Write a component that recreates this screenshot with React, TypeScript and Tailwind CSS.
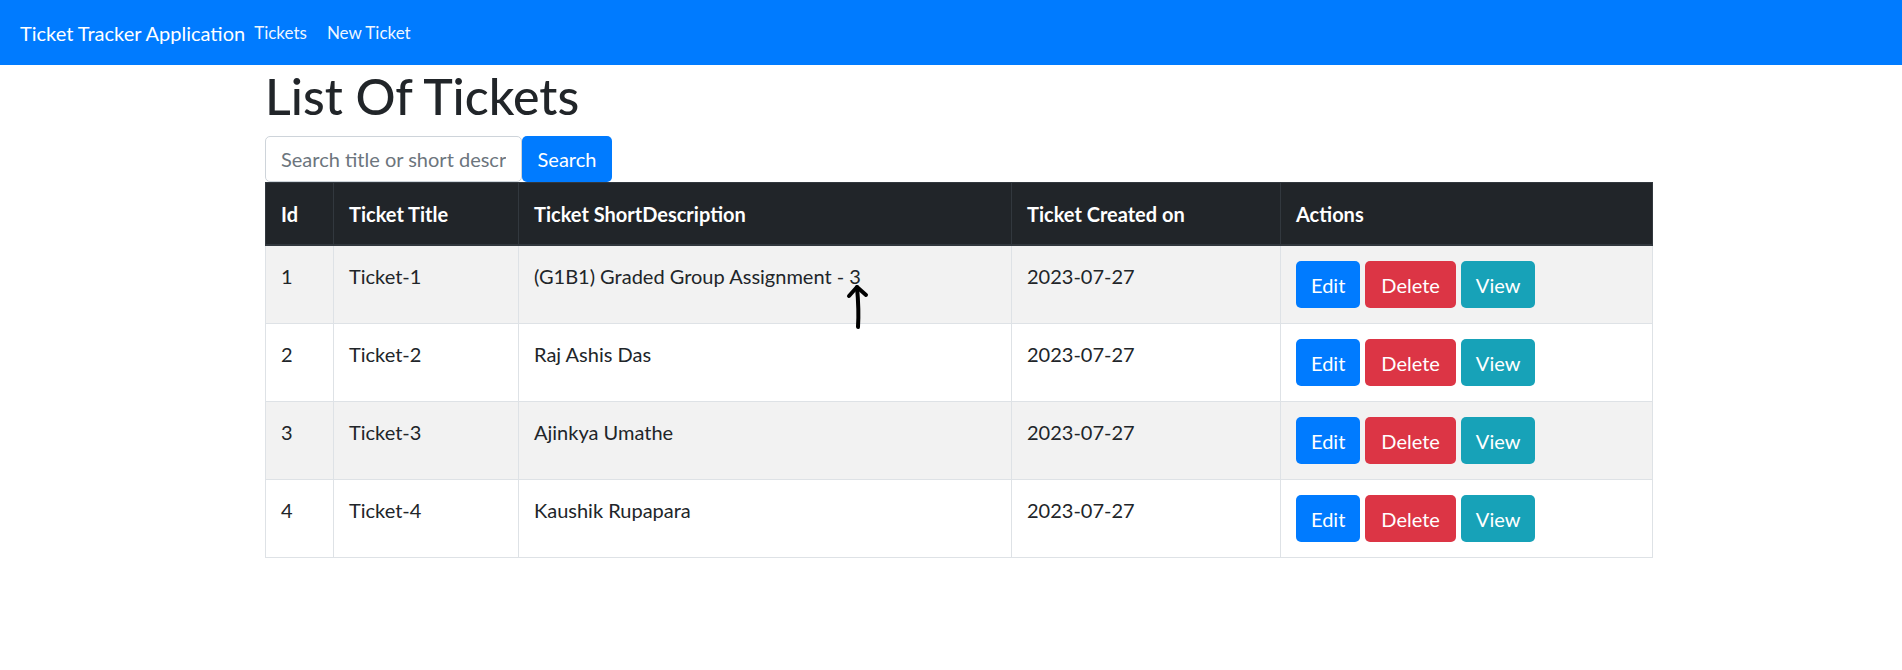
import React from 'react'

type Ticket = {
  id: number
  title: string
  shortDescription: string
  createdOn: string
}

const tickets: Ticket[] = [
  { id: 1, title: 'Ticket-1', shortDescription: '(G1B1) Graded Group Assignment - 3', createdOn: '2023-07-27' },
  { id: 2, title: 'Ticket-2', shortDescription: 'Raj Ashis Das', createdOn: '2023-07-27' },
  { id: 3, title: 'Ticket-3', shortDescription: 'Ajinkya Umathe', createdOn: '2023-07-27' },
  { id: 4, title: 'Ticket-4', shortDescription: 'Kaushik Rupapara', createdOn: '2023-07-27' },
]

const font = { fontFamily: 'Lato, "Open Sans", sans-serif' }

function Navbar() {
  return (
    <nav className="flex h-[65px] items-center bg-[#007bff] pl-[20px] text-white">
      <a href="#" className="text-[20px] leading-[30px] text-white">Ticket Tracker Application</a>
      <a href="#" className="ml-[9px] text-[17px] leading-[30px] text-white/95">Tickets</a>
      <a href="#" className="ml-[20px] text-[17px] leading-[30px] text-white/95">New Ticket</a>
    </nav>
  )
}

export default function App() {
  return (
    <div className="min-h-screen bg-white text-[#212529]" style={font}>
      <Navbar />

      <div className="ml-[265px] w-[1387px]">
        <h1 className="mt-[1px] mb-[10px] text-[50px] font-medium leading-[1.2]">List Of Tickets</h1>

        {/* Search */}
        <form className="flex h-[46px]">
          <input
            type="text"
            placeholder="Search title or short description"
            className="w-[257px] rounded-[5px] border border-[#ced4da] bg-white px-[15px] text-[20px] text-[#495057] placeholder:text-[#6c757d] outline-none"
          />
          <button type="button" className="w-[90px] rounded-[5px] bg-[#007bff] text-[20px] text-white">
            Search
          </button>
        </form>

        {/* Tickets table */}
        <div className="relative">
          <table className="w-[1387px] table-fixed border-collapse text-[20px] leading-[30px]">
            <colgroup>
              <col className="w-[68px]" />
              <col className="w-[185px]" />
              <col className="w-[493px]" />
              <col className="w-[269px]" />
              <col className="w-[372px]" />
            </colgroup>
            <thead>
              <tr className="bg-[#212529] text-left text-white">
                <th className="border border-b-2 border-[#32383e] px-[15px] pt-[16px] pb-[15px] font-bold">Id</th>
                <th className="border border-b-2 border-[#32383e] px-[15px] pt-[16px] pb-[15px] font-bold">Ticket Title</th>
                <th className="border border-b-2 border-[#32383e] px-[15px] pt-[16px] pb-[15px] font-bold">Ticket ShortDescription</th>
                <th className="border border-b-2 border-[#32383e] px-[15px] pt-[16px] pb-[15px] font-bold">Ticket Created on</th>
                <th className="border border-b-2 border-[#32383e] px-[15px] pt-[16px] pb-[15px] font-bold">Actions</th>
              </tr>
            </thead>
            <tbody>
              {tickets.map((t, i) => (
                <tr key={t.id} className={i % 2 === 0 ? 'bg-[#f2f2f2]' : 'bg-white'}>
                  <td className="border border-[#dee2e6] px-[15px] pt-[15px] align-top">{t.id}</td>
                  <td className="border border-[#dee2e6] px-[15px] pt-[15px] align-top">{t.title}</td>
                  <td className="border border-[#dee2e6] px-[15px] pt-[15px] align-top">{t.shortDescription}</td>
                  <td className="border border-[#dee2e6] px-[15px] pt-[15px] align-top">{t.createdOn}</td>
                  <td className="border border-[#dee2e6] px-[15px] py-[15px] align-top">
                    <div className="flex gap-[5px]">
                      <button className="h-[47px] rounded-[5px] bg-[#007bff] px-[15px] text-white">Edit</button>
                      <button className="h-[47px] rounded-[5px] bg-[#dc3545] px-[16px] text-white">Delete</button>
                      <button className="h-[47px] rounded-[5px] bg-[#17a2b8] px-[15px] text-white">View</button>
                    </div>
                  </td>
                </tr>
              ))}
            </tbody>
          </table>

          {/* hand-drawn arrow annotation */}
          <svg
            className="pointer-events-none absolute left-[581px] top-[102px]"
            width="24"
            height="46"
            viewBox="0 0 24 46"
            fill="none"
            stroke="#000"
            strokeWidth="4"
            strokeLinecap="round"
            strokeLinejoin="round"
          >
            <path d="M11 3 C12 14 13 28 12 43" />
            <path d="M3 12 L11 3 L20 11" />
          </svg>
        </div>
      </div>
    </div>
  )
}
